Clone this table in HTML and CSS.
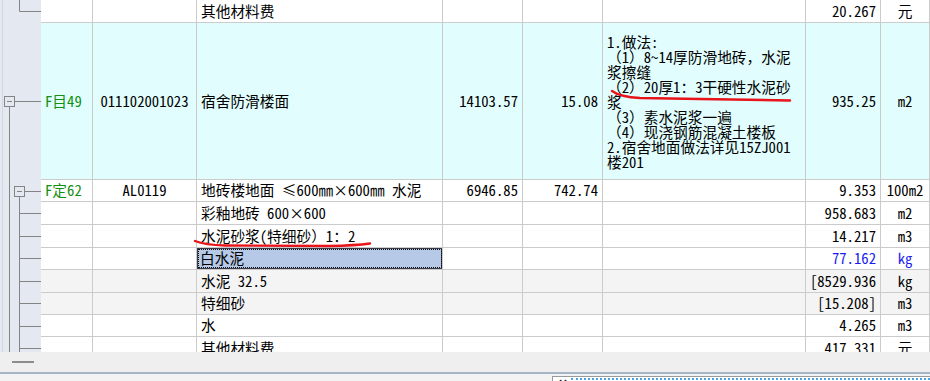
FILE: index.html
```html
<!DOCTYPE html>
<html lang="zh-CN">
<head>
<meta charset="utf-8">
<title>清单</title>
<link rel="stylesheet" href="styles.css">
</head>
<body>
<div class="main">
  <div class="tree">
    <svg class="tree-svg" width="41" height="352" viewBox="0 0 41 352">
      <g fill="none" stroke="#848484" stroke-width="1">
        <path d="M2.5 0 V352" stroke="#cfd6e0"/>
        <path d="M19.5 0 V11.5 H41"/>
        <rect x="4.5" y="96.5" width="10" height="10" fill="#e4e9f1"/>
        <path d="M7 101.5 H12"/>
        <path d="M14.5 101.5 H41"/>
        <path d="M9.5 106.5 V352"/>
        <rect x="14.5" y="186.5" width="10" height="10" fill="#e4e9f1"/>
        <path d="M17 191.5 H22"/>
        <path d="M24.5 191.5 H41"/>
        <path d="M19.5 196.5 V352"/>
        <path d="M19.5 213.5 H41 M19.5 236.5 H41 M19.5 258.5 H41 M19.5 281.5 H41 M19.5 303.5 H41 M19.5 326.5 H41 M19.5 348.5 H41"/>
      </g>
    </svg>
  </div>
  <div class="grid">
    <div class="row h23">
      <div class="cell"></div>
      <div class="cell"></div>
      <div class="cell name">其他材料费</div>
      <div class="cell num"></div>
      <div class="cell num"></div>
      <div class="cell"></div>
      <div class="cell num">20.267</div>
      <div class="cell unit">元</div>
    </div>
    <div class="row tall cyan">
      <div class="cell code">F目49</div>
      <div class="cell id">011102001023</div>
      <div class="cell name">宿舍防滑楼面</div>
      <div class="cell num">14103.57</div>
      <div class="cell num">15.08</div>
      <div class="cell desc">
        <div class="desc-text">
          <div>1.做法:</div>
          <div>（1）8~14厚防滑地砖，水泥</div>
          <div>浆擦缝</div>
          <div>（2）20厚1：3干硬性水泥砂</div>
          <div>浆</div>
          <div>（3）素水泥浆一遍</div>
          <div>（4）现浇钢筋混凝土楼板</div>
          <div>2.宿舍地面做法详见15ZJ001</div>
          <div>楼201</div>
        </div>
      </div>
      <div class="cell num">935.25</div>
      <div class="cell unit">m2</div>
    </div>
    <div class="row h22">
      <div class="cell code">F定62</div>
      <div class="cell id">AL0119</div>
      <div class="cell name">地砖楼地面 ≤600㎜×600㎜ 水泥</div>
      <div class="cell num">6946.85</div>
      <div class="cell num">742.74</div>
      <div class="cell"></div>
      <div class="cell num">9.353</div>
      <div class="cell unit">100m2</div>
    </div>
    <div class="row h23">
      <div class="cell"></div>
      <div class="cell"></div>
      <div class="cell name">彩釉地砖 600×600</div>
      <div class="cell"></div>
      <div class="cell"></div>
      <div class="cell"></div>
      <div class="cell num">958.683</div>
      <div class="cell unit">m2</div>
    </div>
    <div class="row h23">
      <div class="cell"></div>
      <div class="cell"></div>
      <div class="cell name">水泥砂浆(特细砂）1：2</div>
      <div class="cell"></div>
      <div class="cell"></div>
      <div class="cell"></div>
      <div class="cell num">14.217</div>
      <div class="cell unit">m3</div>
    </div>
    <div class="row h22">
      <div class="cell"></div>
      <div class="cell"></div>
      <div class="cell name selected">白水泥</div>
      <div class="cell"></div>
      <div class="cell"></div>
      <div class="cell"></div>
      <div class="cell num blue">77.162</div>
      <div class="cell unit blue">kg</div>
    </div>
    <div class="row h23 gray">
      <div class="cell"></div>
      <div class="cell"></div>
      <div class="cell name">水泥 32.5</div>
      <div class="cell"></div>
      <div class="cell"></div>
      <div class="cell"></div>
      <div class="cell num">[8529.936</div>
      <div class="cell unit">kg</div>
    </div>
    <div class="row h22 gray">
      <div class="cell"></div>
      <div class="cell"></div>
      <div class="cell name">特细砂</div>
      <div class="cell"></div>
      <div class="cell"></div>
      <div class="cell"></div>
      <div class="cell num">[15.208]</div>
      <div class="cell unit">m3</div>
    </div>
    <div class="row h22">
      <div class="cell"></div>
      <div class="cell"></div>
      <div class="cell name">水</div>
      <div class="cell"></div>
      <div class="cell"></div>
      <div class="cell"></div>
      <div class="cell num">4.265</div>
      <div class="cell unit">m3</div>
    </div>
    <div class="row h23">
      <div class="cell"></div>
      <div class="cell"></div>
      <div class="cell name">其他材料费</div>
      <div class="cell"></div>
      <div class="cell"></div>
      <div class="cell"></div>
      <div class="cell num">417.331</div>
      <div class="cell unit">元</div>
    </div>
  </div>
  <svg class="marks" width="930" height="352" viewBox="0 0 930 352">
    <g fill="none" stroke="#e8141a" stroke-width="2.4" stroke-linecap="round">
      <path d="M612 91 Q620 97 640 98 L700 99 L790 100.5"/>
      <path d="M195 241 Q205 245 225 245.5 L330 246 Q355 245.5 370 243.5"/>
    </g>
  </svg>
</div>
<div class="status">
  <span class="dash"></span>
</div>
<div class="footer">
  <div class="tab">
    <span class="tab-x">×</span>
    <span class="tab-dots"></span>
  </div>
</div>
</body>
</html>
```

FILE: styles.css
```css
* { box-sizing: border-box; }

html, body {
  margin: 0;
  padding: 0;
}

body {
  width: 930px;
  height: 381px;
  overflow: hidden;
  background: #f0f0f0;
  font-family: "Noto Sans Mono CJK SC", "Noto Sans CJK SC", monospace;
  font-size: 14.7px;
  color: #000;
}

.main {
  position: relative;
  display: flex;
  height: 352px;
  overflow: hidden;
  background: #fff;
}

.tree {
  width: 41px;
  flex: none;
  background: #e4e9f1;
}

.tree-svg { display: block; }

.grid {
  flex: 1;
  display: flex;
  flex-direction: column;
}

.row {
  display: grid;
  grid-template-columns: 52px 104px 246px 80px 80px 203px 75px 49px;
  border-bottom: 1px solid #cbcbcb;
  flex: none;
  background: #fff;
}

.row.h22 { height: 22px; }
.row.h23 { height: 23px; }
.row.tall { height: 157px; }
.row.cyan { background: #e1fdfd; }
.row.gray { background: #f4f4f4; }

.cell {
  display: flex;
  align-items: center;
  padding: 0 4px;
  border-right: 1px solid #cbcbcb;
  white-space: nowrap;
  overflow: hidden;
  line-height: 1;
}

.cell.code { color: #139013; padding-left: 4px; }
.cell.id { justify-content: center; }
.cell.num { justify-content: flex-end; padding-right: 4px; }
.cell.unit { justify-content: center; }
.cell.blue { color: #1c1cf0; }

.cell.selected {
  background: #b6cae8;
  outline: 1px dotted #111;
  outline-offset: -2px;
  box-shadow: inset 0 0 0 1px #3a3a4a;
  padding-left: 3px;
}

.cell.desc {
  padding-left: 4px;
  align-items: center;
}

.desc-text {
  line-height: 15px;
}

.marks {
  position: absolute;
  left: 0;
  top: 0;
  pointer-events: none;
}

.status {
  height: 20px;
  background: #efefef;
  display: flex;
  align-items: center;
  padding-left: 12px;
}

.dash {
  width: 22px;
  height: 2px;
  background: #8c8c8c;
}

.footer {
  height: 9px;
  border-top: 2px solid #a5b6c9;
  background: #f3f3f3;
  padding-left: 552px;
  padding-top: 2px;
}

.tab {
  height: 5px;
  background: #fff;
  border-left: 1px solid #9a9a9a;
  border-top: 1px solid #9a9a9a;
  display: flex;
  align-items: flex-start;
  overflow: hidden;
}

.tab-x {
  font-family: "DejaVu Sans", sans-serif;
  font-size: 12px;
  line-height: 12px;
  font-weight: bold;
  margin: 0 3px 0 5px;
  color: #222;
}

.tab-dots {
  flex: 1;
  margin-top: 1px;
  border-top: 2px dotted #4aa3e0;
}
```
